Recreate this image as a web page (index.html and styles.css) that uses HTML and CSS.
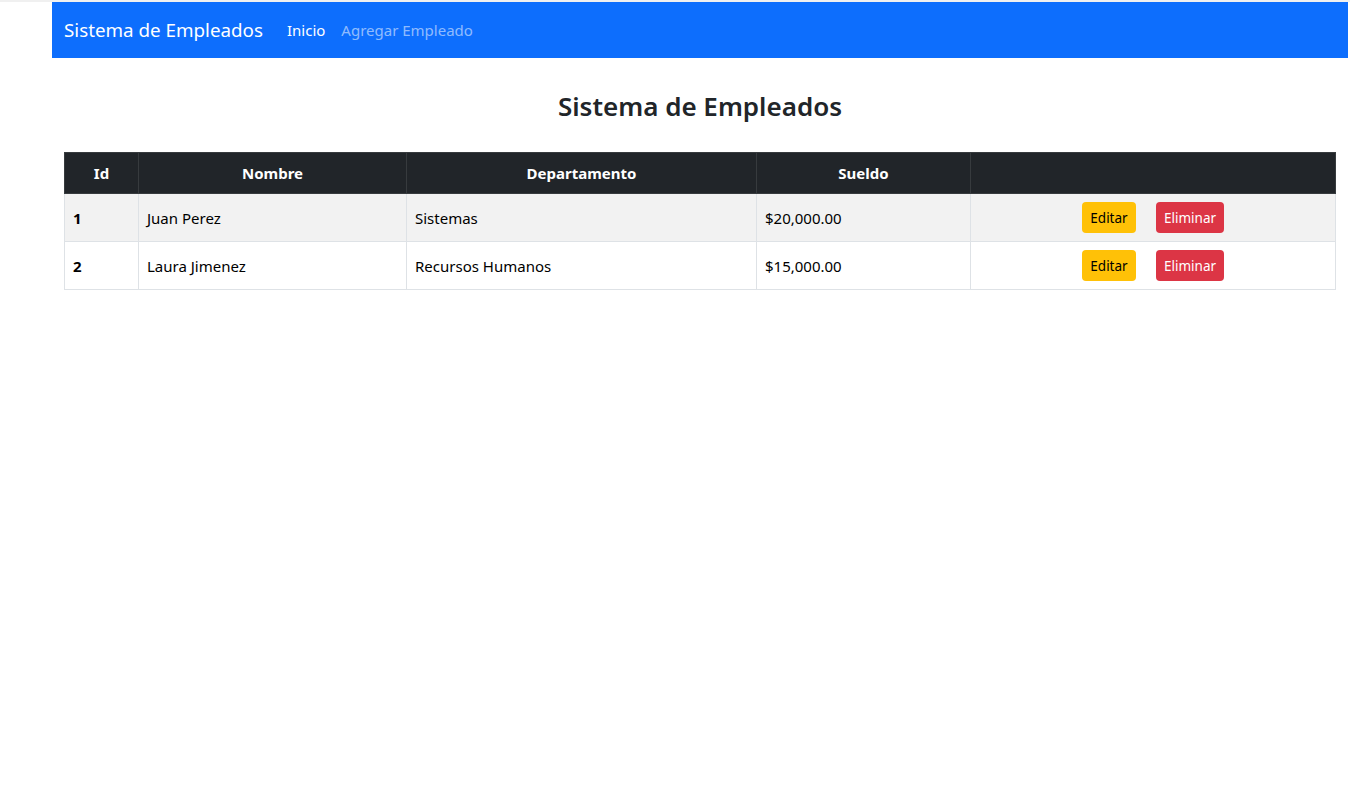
FILE: index.html
```html
<!DOCTYPE html>
<html lang="es">
<head>
<meta charset="utf-8">
<title>Sistema de Empleados</title>
<link rel="stylesheet" href="styles.css">
</head>
<body>
<div class="topline"></div>
<div class="page">
  <div class="main">
    <nav class="navbar">
      <a class="brand" href="#">Sistema de Empleados</a>
      <a class="nav-link active" href="#">Inicio</a>
      <a class="nav-link" href="#">Agregar Empleado</a>
    </nav>
    <div class="content">
      <h3 class="title">Sistema de Empleados</h3>
      <table class="table">
        <thead>
          <tr>
            <th class="c-id">Id</th>
            <th class="c-nombre">Nombre</th>
            <th class="c-depto">Departamento</th>
            <th class="c-sueldo">Sueldo</th>
            <th class="c-acc"></th>
          </tr>
        </thead>
        <tbody>
          <tr class="odd">
            <td class="id">1</td>
            <td>Juan Perez</td>
            <td>Sistemas</td>
            <td>$20,000.00</td>
            <td class="acc"><div class="btns"><a class="btn warn" href="#">Editar</a><a class="btn danger" href="#">Eliminar</a></div></td>
          </tr>
          <tr>
            <td class="id">2</td>
            <td>Laura Jimenez</td>
            <td>Recursos Humanos</td>
            <td>$15,000.00</td>
            <td class="acc"><div class="btns"><a class="btn warn" href="#">Editar</a><a class="btn danger" href="#">Eliminar</a></div></td>
          </tr>
        </tbody>
      </table>
    </div>
  </div>
</div>
</body>
</html>
```

FILE: styles.css
```css
* { box-sizing: border-box; }
html, body { margin: 0; padding: 0; background: #fff; }
body {
  font-family: "Noto Sans", "Open Sans", "Liberation Sans", sans-serif;
  color: #212529;
  font-size: 16px;
}
.topline { height: 2px; background: #f0f0f0; }
.page { display: flex; padding-left: 52px; padding-right: 2px; }
.main { flex: 1; }
.navbar {
  background: #0d6efd;
  height: 56px;
  display: flex;
  align-items: center;
  padding: 0 12px;
}
.brand {
  color: #fff;
  text-decoration: none;
  font-size: 18.8px;
  margin-right: 24px;
  line-height: 1;
}
.nav-link {
  color: rgba(255,255,255,0.55);
  text-decoration: none;
  font-size: 15px;
  margin-right: 16px;
}
.nav-link.active { color: #fff; }
.content { padding: 0 12px; }
.title {
  text-align: center;
  font-size: 26px;
  font-weight: 600;
  margin: 31px 0 29px;
  line-height: 34px;
}
.table {
  width: 100%;
  border-collapse: collapse;
  font-size: 15px;
  color: #000;
}
.table th {
  background: #212529;
  color: #fff;
  font-weight: 700;
  height: 41px;
  border: 1px solid #373b3e;
  text-align: center;
  padding: 0 8px;
}
.table td {
  height: 48px;
  border: 1px solid #dee2e6;
  padding: 0 8px;
}
.table tr.odd td { background: #f2f2f2; }
.c-id { width: 74px; }
.c-nombre { width: 268px; }
.c-depto { width: 350px; }
.c-sueldo { width: 214px; }
.id { font-weight: 700; }
.btns { display: flex; justify-content: center; gap: 20px; }
.btn {
  display: inline-flex;
  align-items: center;
  justify-content: center;
  height: 31px;
  padding: 0 8px;
  font-size: 13.5px;
  border-radius: 4px;
  text-decoration: none;
}
.btn.warn { background: #ffc107; color: #000; width: 54px; }
.btn.danger { background: #dc3545; color: #fff; width: 68px; }
```
